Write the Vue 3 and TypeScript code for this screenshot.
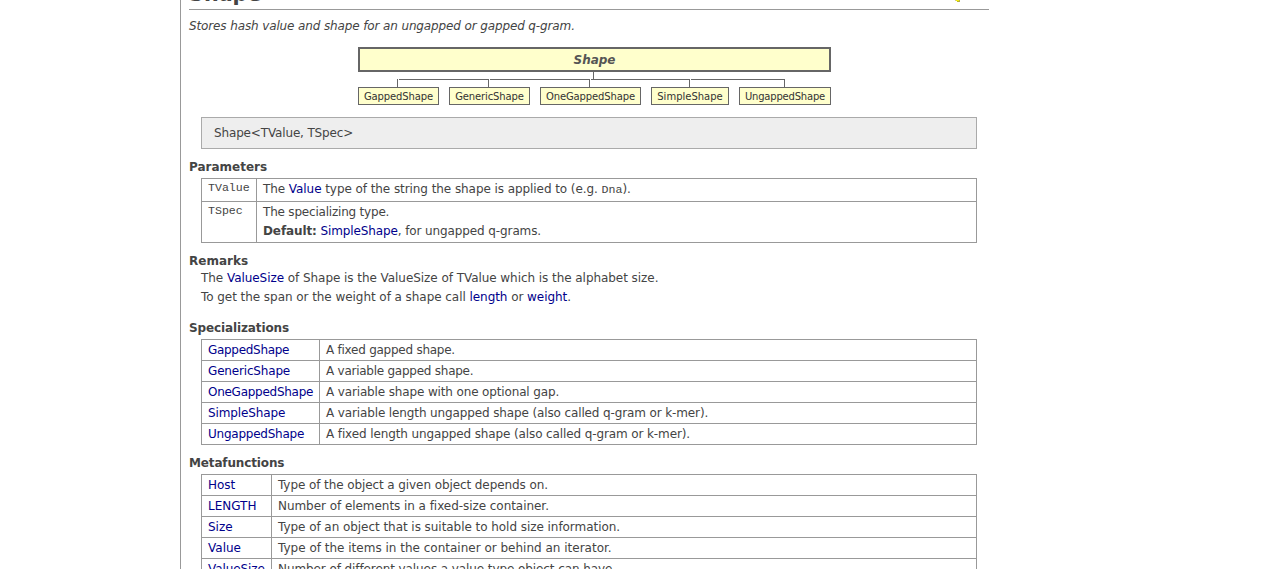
<script setup lang="ts">
interface Entry {
  name: string
  text: string
  nameTrack: number
  textTrack: number
}

const children: string[] = ['GappedShape', 'GenericShape', 'OneGappedShape', 'SimpleShape', 'UngappedShape']

const track = (px: number) => ({ letterSpacing: `${px}px` })

const specializations: Entry[] = [
  { name: 'GappedShape', text: 'A fixed gapped shape.', nameTrack: -0.3, textTrack: -0.25 },
  { name: 'GenericShape', text: 'A variable gapped shape.', nameTrack: -0.17, textTrack: -0.25 },
  { name: 'OneGappedShape', text: 'A variable shape with one optional gap.', nameTrack: -0.27, textTrack: -0.14 },
  { name: 'SimpleShape', text: 'A variable length ungapped shape (also called q-gram or k-mer).', nameTrack: -0.12, textTrack: -0.125 },
  { name: 'UngappedShape', text: 'A fixed length ungapped shape (also called q-gram or k-mer).', nameTrack: -0.24, textTrack: -0.115 },
]

const metafunctions: Entry[] = [
  { name: 'Host', text: 'Type of the object a given object depends on.', nameTrack: 0, textTrack: -0.09 },
  { name: 'LENGTH', text: 'Number of elements in a fixed-size container.', nameTrack: 0, textTrack: -0.05 },
  { name: 'Size', text: 'Type of an object that is suitable to hold size information.', nameTrack: 0, textTrack: -0.05 },
  { name: 'Value', text: 'Type of the items in the container or behind an iterator.', nameTrack: 0, textTrack: 0 },
  { name: 'ValueSize', text: 'Number of different values a value type object can have.', nameTrack: -0.1, textTrack: -0.09 },
]
</script>

<template>
  <div class="page">
    <main class="content">
      <header class="title-row">
        <h1>Shape</h1>
        <svg class="mark" width="6" height="2" viewBox="0 0 6 2" shape-rendering="crispEdges">
          <path d="M0 0H1V1H0z" fill="#c8c8a0" />
          <path d="M1 0H4V1H1z" fill="#f4ec10" />
          <path d="M4 0H5V2H4z" fill="#b5b04a" />
          <path d="M2 1H4V2H2z" fill="#bdb52c" />
        </svg>
      </header>
      <p class="summary">Stores hash value and shape for an ungapped or gapped q-gram.</p>

      <div class="tree">
        <div class="root">Shape</div>
        <svg class="links" width="473" height="15" viewBox="0 0 473 15" shape-rendering="crispEdges">
          <path
            fill="none"
            stroke="#666"
            d="M235.5 0V7M39.5 7V15M41 7.5H131M130.5 7V15M132 7.5H232M231.5 7V15M233 7.5H332M331.5 7V15M333 7.5H427M426.5 7V15"
          />
        </svg>
        <div class="leaves">
          <a v-for="c in children" :key="c" class="leaf" :class="c">{{ c }}</a>
        </div>
      </div>

      <div class="signature">Shape&lt;TValue, TSpec&gt;</div>

      <h2>Parameters</h2>
      <div class="table params">
        <div class="row first">
          <code class="key">TValue</code>
          <div class="cell"><p class="applied">The <a>Value</a> type of the string the shape is applied to (e.g. <code>Dna</code>).</p></div>
        </div>
        <div class="row second">
          <code class="key">TSpec</code>
          <div class="cell">
            <p class="kind">The specializing type.</p>
            <p class="default"><b>Default:</b> <a>SimpleShape</a>, for ungapped q-grams.</p>
          </div>
        </div>
      </div>

      <h2 class="h-remarks">Remarks</h2>
      <div class="remarks">
        <p>The <a>ValueSize</a> of Shape is the ValueSize of TValue which is the alphabet size.</p>
        <p>To get the span or the weight of a shape call <a>length</a> or <a>weight</a>.</p>
      </div>

      <h2 class="h-spec">Specializations</h2>
      <div class="table spec">
        <div v-for="e in specializations" :key="e.name" class="row">
          <div class="key"><a :style="track(e.nameTrack)">{{ e.name }}</a></div>
          <div class="cell" :style="track(e.textTrack)">{{ e.text }}</div>
        </div>
      </div>

      <h2 class="h-meta">Metafunctions</h2>
      <div class="table meta">
        <div v-for="e in metafunctions" :key="e.name" class="row">
          <div class="key"><a :style="track(e.nameTrack)">{{ e.name }}</a></div>
          <div class="cell" :style="track(e.textTrack)">{{ e.text }}</div>
        </div>
      </div>
    </main>
  </div>
</template>

<style>
body {
  margin: 0;
  background: #fff;
}
</style>

<style scoped>
* {
  box-sizing: border-box;
}
.page {
  height: 569px;
  overflow: hidden;
  padding-left: 180px;
  font: 12px/19px Verdana, 'DejaVu Sans', sans-serif;
  color: #444;
}
.content {
  width: 809px;
  height: 569px;
  padding-left: 8px;
  border-left: 1px solid #999;
}
h1,
h2,
p {
  margin: 0;
}
a {
  color: #00008b;
  text-decoration: none;
}
.title-row {
  display: flex;
  justify-content: space-between;
  height: 10px;
  border-bottom: 1px solid #999;
}
h1 {
  height: 30px;
  margin-top: -21px;
  font-size: 20.7px;
  line-height: 30px;
}
.mark {
  margin-right: 28px;
}
.summary {
  height: 37px;
  padding-top: 7px;
  font-style: italic;
  letter-spacing: -0.125px;
}
.tree {
  width: 473px;
  margin-left: 169px;
}
.root {
  height: 25px;
  border: 2px solid #666;
  background: #ffc;
  color: #555;
  font-weight: bold;
  font-style: italic;
  line-height: 22px;
  text-align: center;
}
.links {
  display: block;
}
.leaves {
  display: flex;
  justify-content: space-between;
}
.leaf {
  height: 18px;
  border: 1px solid #666;
  background: #ffc;
  color: #333;
  font-size: 10px;
  line-height: 17px;
  text-align: center;
  white-space: nowrap;
}
.GappedShape,
.GenericShape {
  width: 81px;
  letter-spacing: -0.12px;
}
.OneGappedShape {
  width: 101px;
  letter-spacing: -0.12px;
}
.SimpleShape {
  width: 78px;
}
.UngappedShape {
  width: 92px;
  letter-spacing: -0.2px;
}
.signature {
  width: 776px;
  height: 32px;
  margin: 12px 0 0 12px;
  padding-left: 12px;
  border: 1px solid #aaa;
  background: #eee;
  line-height: 30px;
  letter-spacing: -0.15px;
}
h2 {
  height: 29px;
  padding-top: 9px;
  font-size: 12px;
  line-height: 18px;
}
.table {
  width: 776px;
  margin-left: 12px;
  border: 1px solid #999;
}
.row {
  display: flex;
  height: 21px;
  border-bottom: 1px solid #999;
}
.row:last-child {
  height: 20px;
  border-bottom: 0;
}
.key {
  flex: none;
  padding-left: 6px;
  border-right: 1px solid #999;
  line-height: 20px;
}
.cell {
  padding-left: 6px;
  line-height: 20px;
  white-space: nowrap;
}
code {
  font-family: 'Courier New', 'Liberation Mono', monospace;
  font-size: 11.6px;
  line-height: 1;
  letter-spacing: 0;
}
.params .key {
  width: 55px;
  line-height: 18px;
}
.params .first {
  height: 23px;
}
.params .second:last-child {
  height: 40px;
}
.params .cell {
  padding-top: 1px;
  line-height: 19px;
}
.applied {
  letter-spacing: -0.07px;
}
.kind {
  letter-spacing: -0.2px;
}
.default {
  letter-spacing: -0.11px;
}
.spec .key {
  width: 118px;
}
.meta .key {
  width: 70px;
}
.h-remarks {
  height: 26px;
}
.remarks {
  height: 50px;
  padding-left: 12px;
  letter-spacing: -0.055px;
}
.h-spec {
  height: 20px;
  padding-top: 0;
  letter-spacing: -0.12px;
}
.h-meta {
  letter-spacing: -0.14px;
}
</style>
